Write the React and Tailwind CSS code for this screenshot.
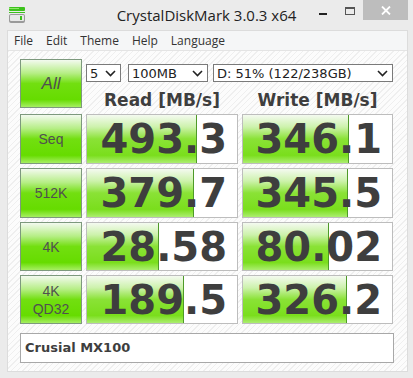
import React from 'react';

const rows = [
    { label: ['Seq'], h: 'h-[50px]', read: { v: '493.3', w: 110 }, write: { v: '346.1', w: 106 } },
    { label: ['512K'], h: 'h-[50px]', read: { v: '379.7', w: 107 }, write: { v: '345.5', w: 105 } },
    { label: ['4K'], h: 'h-[49px]', read: { v: '28.58', w: 72 }, write: { v: '80.02', w: 86 } },
    { label: ['4K', 'QD32'], h: 'h-[49px]', read: { v: '189.5', w: 97 }, write: { v: '326.2', w: 104 } },
];

const greenBtn =
    'border border-[#7d997d] bg-[linear-gradient(to_bottom,#f3faef_0%,#b6ee86_28%,#72df10_50%,#66dc00_84%,#a6ef62_100%)] text-[#505050] flex flex-col items-center justify-center';

const Chevron = () => (
    <svg width="11" height="7" viewBox="0 0 11 7" className="shrink-0">
        <path d="M1 1 L5.5 5.5 L10 1" fill="none" stroke="#222" strokeWidth="1.6" />
    </svg>
);

const Select = ({ text, className }) => (
    <div className={`h-[18px] border border-[#7a7a7a] bg-white flex items-center justify-between pl-[3px] pr-[4px] text-[13px] text-[#222] leading-none ${className}`}>
        <span>{text}</span>
        <Chevron />
    </div>
);

const Cell = ({ value, width }) => (
    <div className="relative border border-[#bdbdbd] bg-white overflow-hidden flex items-center justify-end pr-[10px]">
        <div
            className="absolute left-0 top-0 bottom-0 border-r border-[#4e9a28] bg-[linear-gradient(to_bottom,#f4faf0_0%,#cdf2ac_25%,#8ae236_50%,#7ade1c_84%,#acee70_100%)]"
            style={{ width }}
        ></div>
        <span className="relative text-[40px] leading-none font-bold text-[#3e3e3e]">{value}</span>
    </div>
);

export default function App() {
    return (
        <div className="w-[413px] h-[378px] bg-[#ebebeb] flex flex-col font-['DejaVu_Sans',sans-serif] overflow-hidden">
            {/* title bar */}
            <div className="h-[30px] relative flex items-start">
                <svg width="18" height="18" viewBox="0 0 18 18" className="absolute left-[8px] top-[6px]">
                    <rect x="1" y="1" width="16" height="4" rx="1" fill="#3cc21c" />
                    <rect x="1" y="2" width="10" height="1" fill="#8ee86a" />
                    <rect x="1" y="6" width="16" height="1" fill="#3cc21c" />
                    <rect x="1" y="8" width="16" height="9" rx="2" fill="#9a9a9a" />
                    <rect x="2" y="9" width="14" height="6" rx="1" fill="#e8e8e8" />
                    <rect x="12" y="10" width="2" height="4" fill="#3cc21c" />
                </svg>
                <div className="absolute left-0 right-0 top-[5px] text-center text-[15px] text-[#222] font-['Open_Sans',sans-serif] leading-[20px]">
                    CrystalDiskMark 3.0.3 x64
                </div>
                <div className="absolute left-[319px] top-[13px] w-[8px] h-[2px] bg-[#222]"></div>
                <div className="absolute left-[345px] top-[7px] w-[10px] h-[8px] border border-[#555] border-t-2"></div>
                <div className="absolute left-[363px] top-0 w-[45px] h-[20px] bg-[#bdbdbd] flex items-center justify-center">
                    <svg width="10" height="9" viewBox="0 0 10 9">
                        <path d="M1 0.5 L9 8.5 M9 0.5 L1 8.5" stroke="#fff" strokeWidth="1.8" />
                    </svg>
                </div>
            </div>

            {/* client */}
            <div className="ml-[7px] w-[401px] h-[342px] border border-[#dcdcdc] flex flex-col">
                <div className="h-[20px] bg-[#f5f6f7] border-b border-[#e4e4e4] flex items-center gap-[13px] pl-[6px] text-[12px] text-[#333] font-['Open_Sans',sans-serif]">
                    <span>File</span>
                    <span>Edit</span>
                    <span>Theme</span>
                    <span>Help</span>
                    <span>Language</span>
                </div>
                <div className="flex-1 pl-[12px] pt-[8px] bg-[repeating-linear-gradient(135deg,#efefef_0px,#efefef_1px,#fcfcfc_1px,#fcfcfc_4px)]">
                    <div className="grid grid-cols-[62px_152px_151px] gap-x-[4px]">
                        <div className={`${greenBtn} h-[49px]`}>
                            <span className="text-[17px] italic font-['Liberation_Sans',sans-serif]">All</span>
                        </div>
                        <div className="col-span-2 flex flex-col">
                            <div className="flex mt-[5px]">
                                <Select text="5" className="w-[35px]" />
                                <Select text="100MB" className="w-[80px] ml-[7px]" />
                                <Select text="D: 51% (122/238GB)" className="w-[180px] ml-[5px]" />
                            </div>
                            <div className="grid grid-cols-[152px_151px] gap-x-[4px] mt-[8px]">
                                <div className="text-center text-[17px] font-bold text-[#3e3e3e] leading-[20px]">Read [MB/s]</div>
                                <div className="text-center text-[17px] font-bold text-[#3e3e3e] leading-[20px]">Write [MB/s]</div>
                            </div>
                        </div>
                    </div>

                    <div className="flex flex-col gap-y-[4px] mt-[4px]">
                        {rows.map((r) => (
                            <div key={r.read.v} className={`grid grid-cols-[62px_152px_151px] gap-x-[4px] ${r.h}`}>
                                <div className={greenBtn}>
                                    {r.label.map((l) => (
                                        <span key={l} className="text-[14px] leading-[18px] font-['Liberation_Sans',sans-serif]">{l}</span>
                                    ))}
                                </div>
                                <Cell value={r.read.v} width={r.read.w} />
                                <Cell value={r.write.v} width={r.write.w} />
                            </div>
                        ))}
                    </div>

                    <div className="mt-[9px] w-[374px] h-[30px] border border-[#a8a8a8] bg-white flex items-center pl-[4px]">
                        <span className="text-[13px] font-bold text-[#3e3e3e]">Crusial MX100</span>
                    </div>
                </div>
            </div>
        </div>
    );
}
